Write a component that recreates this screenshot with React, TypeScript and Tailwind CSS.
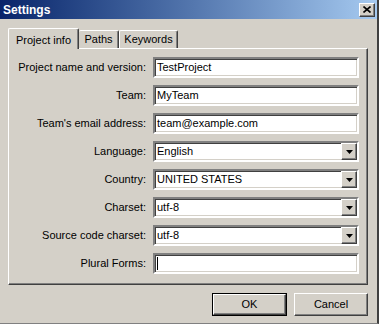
import React from "react";

const font = { fontFamily: '"Liberation Sans", Arial, sans-serif' };

const sunken =
  "border-2 border-t-[#808080] border-l-[#808080] border-b-white border-r-white shadow-[inset_1px_1px_0_#404040,inset_-1px_-1px_0_#d4d0c8]";
const raised =
  "border border-t-white border-l-white border-b-[#404040] border-r-[#404040] shadow-[inset_-1px_-1px_0_#808080]";

type Field = { label: string; value: string; select?: boolean; caret?: boolean };

const fields: Field[] = [
  { label: "Project name and version:", value: "TestProject" },
  { label: "Team:", value: "MyTeam" },
  { label: "Team's email address:", value: "team@example.com" },
  { label: "Language:", value: "English", select: true },
  { label: "Country:", value: "UNITED STATES", select: true },
  { label: "Charset:", value: "utf-8", select: true },
  { label: "Source code charset:", value: "utf-8", select: true },
  { label: "Plural Forms:", value: "", caret: true },
];

function Arrow() {
  return (
    <div className={`${raised} w-[16px] h-[17px] bg-[#d4d0c8] flex items-center justify-center`}>
      <svg width="7" height="4" viewBox="0 0 7 4">
        <path d="M0 0h7L3.5 4z" fill="#000" />
      </svg>
    </div>
  );
}

function Row({ f }: { f: Field }) {
  return (
    <div className="flex items-center h-[21px]">
      <div className="w-[137px] text-right pr-[7px] text-black whitespace-nowrap">{f.label}</div>
      <div className={`${sunken} w-[206px] h-[21px] bg-white flex items-center`}>
        <div className="flex-1 pl-[2px] leading-none text-black flex items-center">
          {f.caret ? <span className="inline-block w-px h-[13px] bg-black" /> : f.value}
        </div>
        {f.select ? <Arrow /> : null}
      </div>
    </div>
  );
}

export default function App() {
  return (
    <div
      className="w-[379px] h-[324px] bg-[#d4d0c8] flex flex-col border-r-2 border-b border-r-[#404040] border-b-[#808080] text-[11px]"
      style={font}
    >
      <div className="h-[19px] flex items-center justify-between bg-gradient-to-r from-[#0a246a] to-[#a6caf0] pl-[3px] pr-[2px]">
        <span className="text-white font-bold text-[12px]">Settings</span>
        <div className={`${raised} w-[16px] h-[14px] bg-[#d4d0c8] flex items-center justify-center`}>
          <svg width="8" height="7" viewBox="0 0 8 7">
            <path d="M0.5 0.5L7.5 6.5M7.5 0.5L0.5 6.5" stroke="#000" strokeWidth="1.6" />
          </svg>
        </div>
      </div>

      <div className="flex flex-col pl-[8px] pr-[9px] pt-[8px]">
        <div className="flex items-end h-[21px] relative z-10">
          <div className="h-[21px] w-[71px] bg-[#d4d0c8] border-t border-l border-t-white border-l-white border-r border-r-[#404040] shadow-[inset_-1px_0_0_#808080] rounded-t-[2px] flex items-start justify-center pt-[3px] -mb-[1px] pb-[2px] text-black">
            Project info
          </div>
          <div className="h-[18px] w-[40px] border-t border-t-white border-r border-r-[#404040] shadow-[inset_-1px_0_0_#808080] rounded-t-[2px] flex items-center justify-center text-black">
            Paths
          </div>
          <div className="h-[18px] w-[59px] border-t border-l border-t-white border-l-white border-r border-r-[#404040] shadow-[inset_-1px_0_0_#808080] rounded-t-[2px] flex items-center justify-center text-black">
            Keywords
          </div>
        </div>
        <div className="h-[237px] border border-t-white border-l-white border-r-[#404040] border-b-[#404040] shadow-[inset_-1px_-1px_0_#808080] flex flex-col gap-[7px] pt-[8px] pl-[7px]">
          {fields.map((f) => (
            <Row key={f.label} f={f} />
          ))}
        </div>
      </div>

      <div className="flex justify-end gap-[7px] pr-[9px] pt-[8px]">
        <div className="w-[75px] h-[23px] border border-black">
          <div className={`${raised} w-full h-full flex items-center justify-center text-black`}>OK</div>
        </div>
        <div className={`${raised} w-[74px] h-[23px] flex items-center justify-center text-black`}>Cancel</div>
      </div>
    </div>
  );
}
